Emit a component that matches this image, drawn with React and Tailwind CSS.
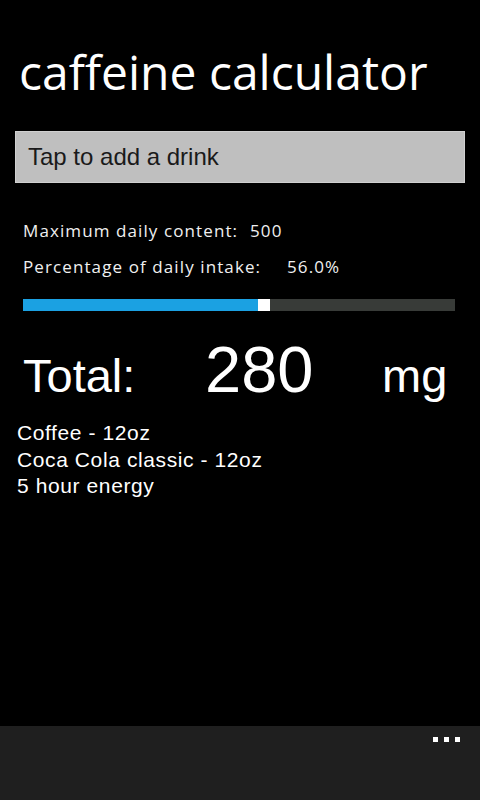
import React from 'react';

const drinks = ['Coffee - 12oz', 'Coca Cola classic - 12oz', '5 hour energy'];

const App = () => {
  const max = 500;
  const total = 280;
  const pct = (total / max) * 100;

  return (
    <div className="w-[480px] h-[800px] bg-black text-white flex flex-col overflow-hidden">
      <div className="flex-1 flex flex-col">
        {/* Title */}
        <h1 className="pl-[19px] pt-[44px] text-[48px] leading-[56px] font-normal font-['Open_Sans',sans-serif]">
          caffeine calculator
        </h1>

        {/* Add drink box */}
        <div className="mx-[15px] mt-[31px] h-[52px] bg-[#bfbfbf] border border-[#d0d0d0] flex items-center pl-[12px]">
          <span className="text-[24px] text-[#1a1a1a] font-['Liberation_Sans',Arial,sans-serif]">
            Tap to add a drink
          </span>
        </div>

        {/* Stats */}
        <div className="pl-[23px] pr-[25px] mt-[36px] font-['Open_Sans',sans-serif] text-[17px] tracking-[1.1px] text-[#f0f0f0]">
          <div className="flex h-[24px] items-center">
            <span className="w-[227px]">Maximum daily content:</span>
            <span>{max}</span>
          </div>
          <div className="flex h-[24px] items-center mt-[12px]">
            <span className="w-[264px]">Percentage of daily intake:</span>
            <span>{pct.toFixed(1)}%</span>
          </div>

          {/* Progress */}
          <div className="mt-[20px] h-[12px] bg-[#383b38] flex">
            <div className="bg-[#1ba1e2] h-full" style={{ width: `calc((100% - 12px) * ${pct / 100})` }} />
            <div className="bg-white h-full w-[12px]" />
          </div>
        </div>

        {/* Total */}
        <div className="flex items-end pl-[23px] mt-[28px] font-['Liberation_Sans',Arial,sans-serif] h-[62px]">
          <span className="text-[47px] leading-[50px] w-[182px]">Total:</span>
          <span className="text-[65px] leading-[62px] w-[177px]">{total}</span>
          <span className="text-[47px] leading-[50px]">mg</span>
        </div>

        {/* Drinks */}
        <ul className="pl-[17px] mt-[19px] font-['Liberation_Sans',Arial,sans-serif] text-[21px] tracking-[0.6px] leading-[26.5px]">
          {drinks.map((d) => (
            <li key={d}>{d}</li>
          ))}
        </ul>
      </div>

      {/* App bar */}
      <div className="h-[74px] bg-[#1f1f1f] flex justify-end pr-[20px] pt-[11px]">
        <div className="flex gap-[6px] h-[5px]">
          <span className="w-[5px] h-[5px] bg-white" />
          <span className="w-[5px] h-[5px] bg-white" />
          <span className="w-[5px] h-[5px] bg-white" />
        </div>
      </div>
    </div>
  );
};

export default App;
